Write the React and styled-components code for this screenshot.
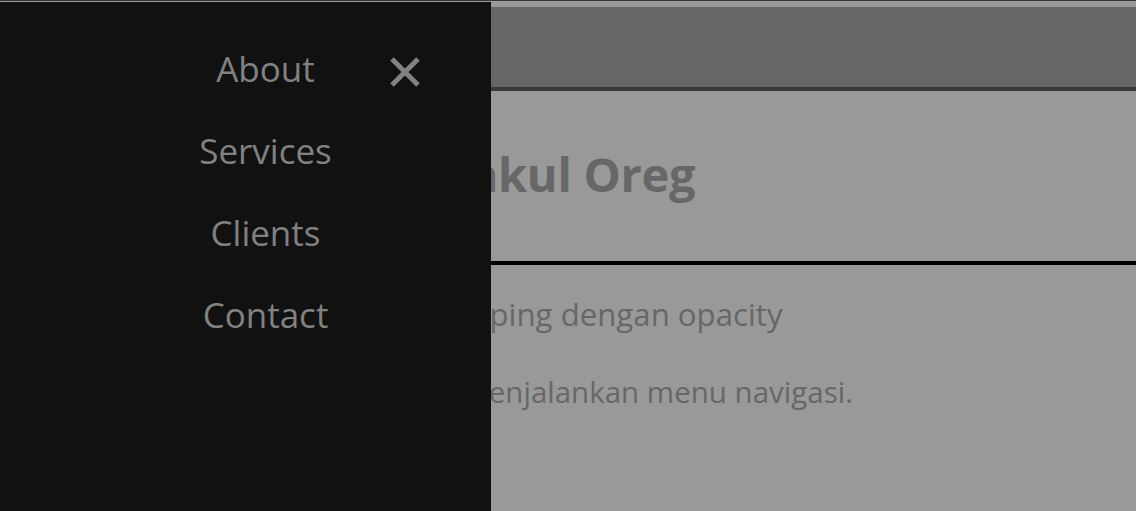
import React from "react";
import styled, { createGlobalStyle } from "styled-components";

const GlobalStyle = createGlobalStyle`
  html, body {
    margin: 0;
    padding: 0;
    background: #999999;
  }
  body {
    font-family: "Open Sans", "Noto Sans", "DejaVu Sans", sans-serif;
  }
  * { box-sizing: border-box; }
`;

const Page = styled.div`
  position: relative;
  min-height: 511px;
  background: #999999;
  border-top: 1px solid #333333;
  padding-top: 6px;
  overflow: hidden;
`;

const Header = styled.header`
  height: 84px;
  background: #666666;
  border-bottom: 4px solid #3a3a3a;
`;

const Hero = styled.section`
  height: 174px;
  display: flex;
  align-items: center;
  justify-content: center;
  border-bottom: 4px solid #000000;
`;

const Title = styled.h1`
  margin: 0;
  font-size: 47px;
  font-weight: 700;
  color: #676767;
  letter-spacing: -0.3px;
  transform: translateY(-2px);
`;

const Body = styled.section`
  display: flex;
  flex-direction: column;
  align-items: center;
  gap: 36px;
  padding-top: 28px;
`;

const Para = styled.p`
  margin: 0;
  font-size: ${(p) => p.$size || 30}px;
  line-height: 42px;
  color: #676767;
  text-align: center;
`;

const Sidebar = styled.nav`
  position: absolute;
  top: 1px;
  left: 0;
  bottom: 0;
  width: 491px;
  background: #111111;
`;

const MenuList = styled.ul`
  list-style: none;
  margin: 0;
  padding: 26px 0 0 40px;
  display: flex;
  flex-direction: column;
  align-items: center;
`;

const MenuItem = styled.li`
  display: block;
`;

const MenuLink = styled.a`
  display: block;
  padding: 16px 0;
  font-size: 35px;
  line-height: 50px;
  color: #818181;
  text-decoration: none;
  cursor: pointer;
`;

const CloseButton = styled.button`
  position: absolute;
  top: 54px;
  left: 389px;
  width: 32px;
  height: 32px;
  padding: 0;
  border: none;
  background: transparent;
  color: #818181;
  cursor: pointer;
  display: flex;
  align-items: center;
  justify-content: center;
`;

const items = ["About", "Services", "Clients", "Contact"];

export default function App() {
  return (
    <>
      <GlobalStyle />
      <Page>
        <Header />
        <Hero>
          <Title>Pakul Oreg</Title>
        </Hero>
        <Body>
          <Para $size={31.2}>Fitur samping dengan opacity</Para>
          <Para $size={29.5}>Tekan untuk menjalankan menu navigasi.</Para>
        </Body>
        <Sidebar>
          <MenuList>
            {items.map((it) => (
              <MenuItem key={it}>
                <MenuLink>{it}</MenuLink>
              </MenuItem>
            ))}
          </MenuList>
          <CloseButton aria-label="Close">
            <svg width="32" height="32" viewBox="0 0 32 32">
              <path
                d="M3 3 L29 29 M29 3 L3 29"
                stroke="currentColor"
                strokeWidth="5"
                strokeLinecap="butt"
              />
            </svg>
          </CloseButton>
        </Sidebar>
      </Page>
    </>
  );
}
